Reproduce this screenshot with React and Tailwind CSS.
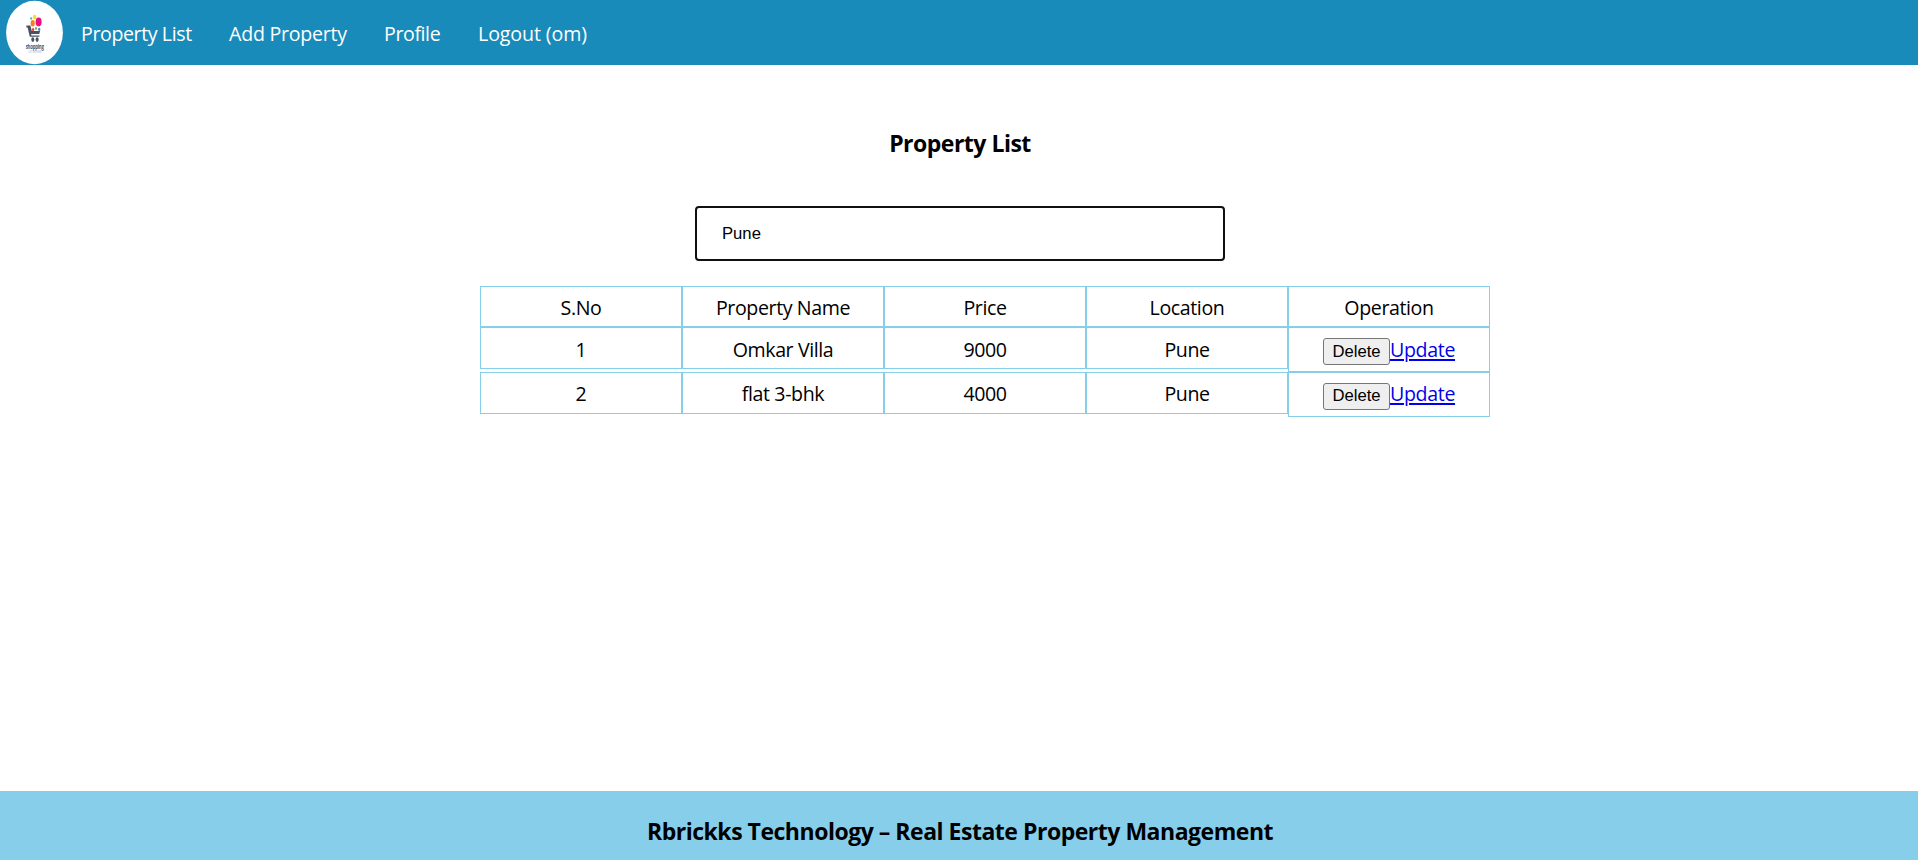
function Logo() {
  return (
    <svg className="block h-[65px] w-[57px] shrink-0" viewBox="0 0 57 65">
      <ellipse cx="28.5" cy="32.5" rx="28.4" ry="31.7" fill="#fff" />
      <ellipse cx="28.6" cy="17" rx="1.8" ry="2.3" fill="#f3e11e" />
      <ellipse cx="25.2" cy="18.4" rx="1" ry="1.2" fill="#35b6c6" />
      <ellipse cx="26.7" cy="23.3" rx="2.1" ry="3.3" fill="#f58220" />
      <ellipse cx="32.6" cy="22" rx="3" ry="4.4" fill="#ec0c86" />
      <ellipse cx="27.1" cy="29.4" rx="1.2" ry="1.5" fill="#e5344c" />
      <ellipse cx="30" cy="28.3" rx="1" ry="1.6" fill="#74b943" />
      <ellipse cx="33.2" cy="29.3" rx="1.1" ry="1.6" fill="#2f7fc4" />
      <path d="M20.4 25.6h4l1.4 5.4h8.3l-.8 3h-8.2l.3 1.4h8v1.4h-9.6l-2.2-9.4h-1.2z" fill="#4b5165" />
      <ellipse cx="26.8" cy="39.6" rx="1.5" ry="2.4" fill="#4b5165" />
      <ellipse cx="31.1" cy="39.6" rx="1.5" ry="2.4" fill="#4b5165" />
      <text x="28.7" y="48.6" textAnchor="middle" textLength="18" lengthAdjust="spacingAndGlyphs" fontSize="7.5" fontWeight="700" fontFamily="Open Sans" fill="#505465">shopping</text>
      <text x="28.7" y="53.4" textAnchor="middle" textLength="13" lengthAdjust="spacingAndGlyphs" fontSize="3.5" fontFamily="Open Sans" fill="#b9bbc4">LET BEGINS</text>
    </svg>
  );
}

const columns = ["S.No", "Property Name", "Price", "Location", "Operation"];

const rows = [
  { id: "1", name: "Omkar Villa", price: "9000", location: "Pune" },
  { id: "2", name: "flat 3-bhk", price: "4000", location: "Pune" },
];

function Cell({ children, first }) {
  return (
    <div className={`h-[42px] w-[202px] border border-[#87ceeb] text-center leading-7 ${first ? "pt-[8px]" : "pt-[7px]"}`}>
      {children}
    </div>
  );
}

export default function App() {
  return (
    <div className="flex h-[860px] flex-col bg-white font-['Open_Sans',sans-serif] text-[19.6px] tracking-[-0.4px] text-black">
      <nav className="flex h-[65px] items-center bg-[#198bba] pl-1.5 leading-7 text-white">
        <Logo />
        <div className="flex gap-[37px] pt-0.5 pl-[18px]">
          <a className="w-[111px] whitespace-nowrap">Property List</a>
          <a className="w-[118px] tracking-[-0.25px] whitespace-nowrap">Add Property</a>
          <a className="w-[57px] whitespace-nowrap">Profile</a>
          <a className="tracking-[-0.1px] whitespace-nowrap">Logout (om)</a>
        </div>
      </nav>
      <main className="flex grow flex-col">
        <h3 className="mt-[62px] pl-0.5 text-center text-[23px] leading-8 font-bold tracking-[-0.5px]">Property List</h3>
        <div className="mt-[47px] flex justify-center pl-0.5">
          <input
            className="h-[55px] w-[530px] rounded-[4px] border-2 border-[#101010] px-[25px] font-['Liberation_Sans',sans-serif] text-[16.67px] tracking-normal outline-none"
            defaultValue="Pune"
          />
        </div>
        <div className="mt-[25px] pl-[480px]">
          <div className="flex h-[41px]">
            {columns.map((h) => (
              <div key={h} className="h-[41px] w-[202px] border border-[#87ceeb] pt-[7px] text-center leading-7">
                {h}
              </div>
            ))}
          </div>
          {rows.map((r, i) => (
            <div key={r.id} className="flex h-[45px]">
              <Cell first={i === 0}>{r.id}</Cell>
              <Cell first={i === 0}>{r.name}</Cell>
              <Cell first={i === 0}>{r.price}</Cell>
              <Cell first={i === 0}>{r.location}</Cell>
              <div className="flex h-[45px] w-[202px] items-start border border-[#87ceeb] pl-[34px]">
                <button className={`mt-[10px] h-[27px] w-[67px] rounded-[3px] border border-[#767676] bg-[#efefef] font-['Liberation_Sans',sans-serif] text-[16.67px] tracking-normal ${i === 0 ? "leading-6" : "pb-0.5 leading-[22px]"}`}>
                  Delete
                </button>
                <a className={`leading-7 tracking-[-0.35px] text-[#0000ee] underline decoration-2 underline-offset-2 ${i === 0 ? "mt-[8px]" : "mt-[7px]"}`}>
                  Update
                </a>
              </div>
            </div>
          ))}
        </div>
      </main>
      <footer className="flex h-[69px] justify-center bg-[#87ceeb] pt-[24px] pl-0.5 text-[23px] leading-8 font-bold tracking-[-0.48px]">
        <span className="whitespace-nowrap">Rbrickks Technology – Real Estate Property Management</span>
      </footer>
    </div>
  );
}
